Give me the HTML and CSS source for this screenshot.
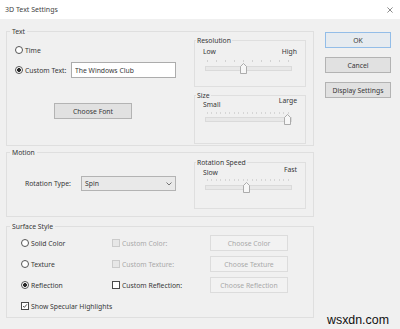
FILE: index.html
```html
<!DOCTYPE html>
<html lang="en">
<head>
    <meta charset="UTF-8">
    <title>3D Text Settings</title>
    <link rel="stylesheet" href="styles.css">
</head>
<body>
    <div class="dialog">
        <div class="titlebar">
            <span class="title">3D Text Settings</span>
            <svg class="close" viewBox="0 0 7 7"><path d="M0.5 0.5 L6.5 6.5 M6.5 0.5 L0.5 6.5"/></svg>
        </div>

        <div class="main">
            <div class="panels">
                <!-- Text -->
                <fieldset class="group group-text">
                    <legend>Text</legend>
                    <div class="text-options">
                        <label class="option row-time"><span class="radio"></span>Time</label>
                        <div class="option row-custom">
                            <span class="radio checked"></span>
                            <span class="custom-label">Custom Text:</span>
                            <input class="textbox" type="text" value="The Windows Club">
                        </div>
                        <button class="btn btn-font">Choose Font</button>
                    </div>
                    <div class="scales">
                        <fieldset class="subgroup sub-resolution">
                            <legend>Resolution</legend>
                            <div class="scale"><span>Low</span><span>High</span></div>
                            <div class="ticks"></div>
                            <div class="rail"><svg class="thumb" style="--pos: 0.44" viewBox="0 0 7 11"><path d="M0.5 3.5 L3.5 0.5 L6.5 3.5 L6.5 10.5 L0.5 10.5 Z"/></svg></div>
                        </fieldset>
                        <fieldset class="subgroup sub-size">
                            <legend>Size</legend>
                            <div class="scale scale-size"><span class="lo">Small</span><span>Large</span></div>
                            <div class="ticks ticks-dense ticks-size"></div>
                            <div class="rail rail-size"><svg class="thumb" style="--pos: 1" viewBox="0 0 7 11"><path d="M0.5 3.5 L3.5 0.5 L6.5 3.5 L6.5 10.5 L0.5 10.5 Z"/></svg></div>
                        </fieldset>
                    </div>
                </fieldset>

                <!-- Motion -->
                <fieldset class="group group-motion">
                    <legend>Motion</legend>
                    <div class="motion-options">
                        <div class="option row-type">
                            <span class="type-label">Rotation Type:</span>
                            <div class="select">
                                <span>Spin</span>
                                <svg class="chevron" viewBox="0 0 6 4"><path d="M0.5 0.5 L3 3 L5.5 0.5"/></svg>
                            </div>
                        </div>
                    </div>
                    <div class="scales">
                        <fieldset class="subgroup sub-speed">
                            <legend>Rotation Speed</legend>
                            <div class="scale scale-speed"><span class="lo">Slow</span><span>Fast</span></div>
                            <div class="ticks ticks-dense ticks-speed"></div>
                            <div class="rail rail-speed"><svg class="thumb" style="--pos: 0.48" viewBox="0 0 7 11"><path d="M0.5 3.5 L3.5 0.5 L6.5 3.5 L6.5 10.5 L0.5 10.5 Z"/></svg></div>
                        </fieldset>
                    </div>
                </fieldset>

                <!-- Surface Style -->
                <fieldset class="group group-surface">
                    <legend>Surface Style</legend>
                    <div class="surface-grid">
                        <label class="option"><span class="radio"></span>Solid Color</label>
                        <label class="option disabled"><span class="check"></span>Custom Color:</label>
                        <button class="btn" disabled>Choose Color</button>

                        <label class="option"><span class="radio"></span>Texture</label>
                        <label class="option disabled"><span class="check"></span>Custom Texture:</label>
                        <button class="btn" disabled>Choose Texture</button>

                        <label class="option"><span class="radio checked"></span>Reflection</label>
                        <label class="option"><span class="check"></span>Custom Reflection:</label>
                        <button class="btn" disabled>Choose Reflection</button>

                        <label class="option specular">
                            <span class="check"><svg viewBox="0 0 8 8"><path d="M1.5 4 L3.2 5.8 L6.5 1.8"/></svg></span>
                            Show Specular Highlights
                        </label>
                    </div>
                </fieldset>
            </div>

            <div class="side">
                <button class="btn btn-default">OK</button>
                <button class="btn">Cancel</button>
                <button class="btn">Display Settings</button>
                <div class="watermark">wsxdn.com</div>
            </div>
        </div>
    </div>
</body>
</html>
```

FILE: styles.css
```css
:root {
    --face: #f0f0f0;
    --line: #dfdfdf;
    --text: #363636;
    --muted: #a8a8a8;
    --btn-face: #e1e1e1;
    --btn-border: #b3b3b3;
}

* {
    box-sizing: border-box;
}

body {
    margin: 0;
    width: 400px;
    height: 329px;
    overflow: hidden;
    background-color: var(--face);
    color: var(--text);
    font-family: "Noto Sans", "Open Sans", sans-serif;
    font-size: 6.8px;
    line-height: 9px;
}

.dialog {
    display: flex;
    flex-direction: column;
    height: 329px;
}

.titlebar {
    flex: none;
    height: 19px;
    background-color: #fff;
    display: flex;
    align-items: center;
    justify-content: space-between;
    padding: 0 7px 0 5px;
}

.title {
    font-size: 7px;
    color: #444;
}

.close {
    width: 6px;
    height: 6px;
    fill: none;
    stroke: #555;
    stroke-width: 0.8;
}

.main {
    flex: 1;
    display: flex;
    padding: 8px 0 0 6px;
}

.panels {
    width: 308px;
    display: flex;
    flex-direction: column;
}

/* group boxes */
.group,
.subgroup {
    margin: 0;
    padding: 0;
    min-width: 0;
    border: 1px solid var(--line);
}

.group {
    display: flex;
}

.group > legend {
    margin-left: 3px;
    padding: 0 2px;
    line-height: 9px;
}

.subgroup > legend {
    margin-left: 1px;
    padding: 0 1px;
    line-height: 9px;
}

.group-text {
    height: 119px;
}

.group-motion {
    height: 69px;
    margin-top: 2px;
}

.group-surface {
    height: 96px;
    margin-top: 5px;
}

/* common controls */
.option {
    display: flex;
    align-items: center;
    gap: 2px;
    white-space: nowrap;
}

.option.disabled {
    color: var(--muted);
}

.radio {
    flex: none;
    width: 8px;
    height: 8px;
    border: 1px solid #555;
    border-radius: 50%;
    background-color: #fff;
}

.radio.checked {
    background: radial-gradient(circle, #2a2a2a 0 1.7px, #fff 2.2px);
}

.check {
    flex: none;
    width: 8px;
    height: 8px;
    border: 1px solid #4a4a4a;
    background-color: #fff;
    display: flex;
}

.check svg {
    width: 100%;
    height: 100%;
    fill: none;
    stroke: #2a2a2a;
    stroke-width: 1.1;
}

.disabled .check {
    border-color: #cbcbcb;
    background-color: #e7e7e7;
}

.btn {
    height: 16px;
    padding: 0;
    border: 1px solid var(--btn-border);
    background-color: var(--btn-face);
    color: var(--text);
    font: inherit;
    display: flex;
    align-items: center;
    justify-content: center;
}

.btn:disabled {
    border-color: #dcdcdc;
    background-color: #f2f2f2;
    color: var(--muted);
}

.btn-default {
    border-color: #93bde8;
    background-color: #e6ebf0;
}

/* text section */
.text-options {
    width: 187px;
    display: flex;
    flex-direction: column;
    align-items: flex-start;
    padding-left: 8px;
}

.row-time {
    height: 12px;
    margin-top: 8px;
}

.row-custom {
    height: 16px;
    margin-top: 6px;
}

.custom-label {
    width: 44px;
}

.textbox {
    width: 105px;
    height: 16px;
    padding: 0 3px;
    border: 1px solid #acacac;
    background-color: #fff;
    color: var(--text);
    font: inherit;
    outline: none;
}

.btn-font {
    width: 78px;
    margin: 25px 0 0 39px;
}

/* slider groups */
.scales {
    width: 112px;
    display: flex;
    flex-direction: column;
}

.sub-resolution {
    height: 51px;
}

.sub-size {
    height: 53px;
    margin-top: 4px;
}

.sub-speed {
    height: 51px;
    margin-top: 1px;
}

.scale {
    display: flex;
    justify-content: space-between;
    align-items: flex-start;
    padding: 2px 8px 0 8px;
}

.scale-size {
    margin-top: -4px;
    padding-top: 0;
}

.scale-size .lo {
    padding-top: 4px;
}

.scale-speed {
    margin-top: -2px;
    padding-top: 0;
}

.scale-speed .lo {
    padding-top: 3px;
}

.ticks {
    height: 2px;
    margin: 4px 16px 0 12px;
    background: repeating-linear-gradient(to right, #d2d2d2 0 1px, transparent 1px 9px);
}

.ticks-dense {
    margin-right: 13px;
    background: repeating-linear-gradient(to right, #d6d6d6 0 1px, transparent 1px 4.5px);
}

.ticks-size {
    margin-top: 3px;
}

.ticks-speed {
    margin-top: 2px;
}

.rail {
    display: grid;
    height: 11px;
    margin: 1px 13px 0 10px;
}

.rail-size {
    margin-top: 0;
}

.rail::before {
    content: '';
    grid-area: 1 / 1;
    align-self: center;
    height: 3px;
    border: 1px solid #dadada;
    background-color: #e8e8e8;
}

.thumb {
    grid-area: 1 / 1;
    width: 7px;
    height: 11px;
    margin-left: calc(var(--pos) * 79px);
    fill: #f7f7f7;
    stroke: #999;
    stroke-width: 0.8;
}

/* motion section */
.motion-options {
    width: 187px;
    padding-left: 18px;
}

.row-type {
    margin-top: 19px;
    gap: 0;
}

.type-label {
    width: 56px;
}

.select {
    width: 95px;
    height: 15px;
    border: 1px solid var(--btn-border);
    background-color: #e9e9e9;
    display: flex;
    align-items: center;
    justify-content: space-between;
    padding: 0 3px 0 3px;
}

.chevron {
    width: 6px;
    height: 4px;
    fill: none;
    stroke: #555;
    stroke-width: 0.8;
}

/* surface section */
.surface-grid {
    display: grid;
    grid-template-columns: 91px 98px 78px;
    grid-auto-rows: 16px;
    row-gap: 5px;
    margin-top: 4px;
    padding-left: 14px;
}

.specular {
    grid-column: 1 / 3;
}

/* right buttons */
.side {
    width: 66px;
    margin-left: 11px;
    display: flex;
    flex-direction: column;
    gap: 9px;
}

.side .btn-default {
    margin-top: 5px;
}

.watermark {
    margin-top: auto;
    margin-bottom: 2px;
    text-align: center;
    white-space: nowrap;
    font-family: "Liberation Sans", Arial, sans-serif;
    font-size: 12.4px;
    line-height: 14px;
    color: #111;
}
```
